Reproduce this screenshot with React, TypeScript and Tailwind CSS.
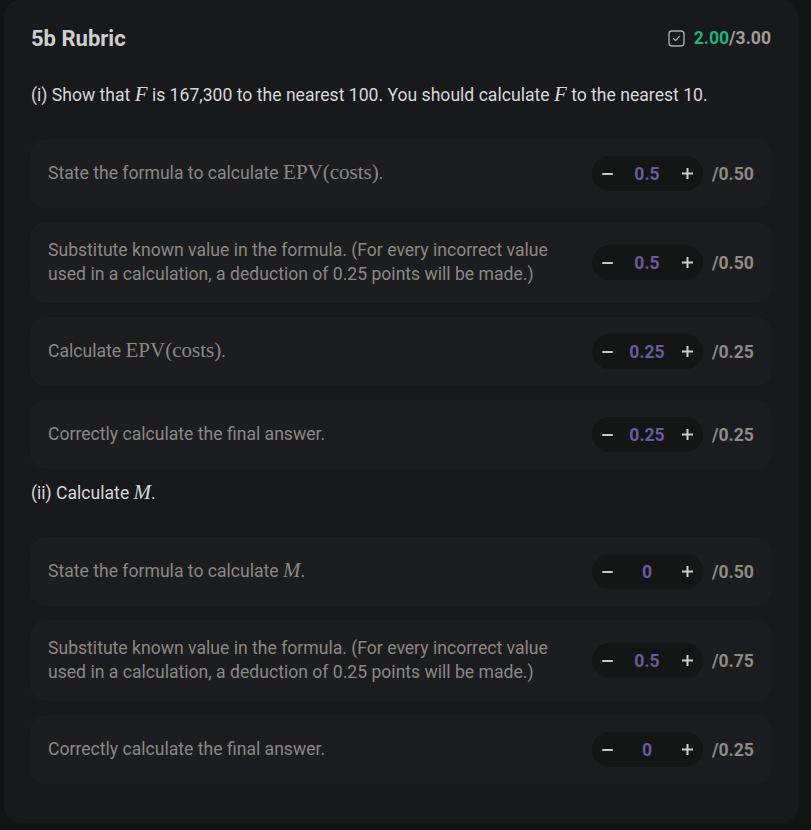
import React from "react";

const M = ({ children, upright = false }: { children: React.ReactNode; upright?: boolean }) => (
  <span
    className={`text-[21px] leading-none ${upright ? "not-italic" : "italic"}`}
    style={{ fontFamily: '"Liberation Serif", "DejaVu Serif", serif' }}
  >
    {children}
  </span>
);

type Item = { text: React.ReactNode; value: string; max: string };

const Row = ({ item }: { item: Item }) => (
  <div className="flex items-center justify-between rounded-2xl bg-[#1c1d1f] py-[17px] pl-[18px] pr-[16px]">
    <div className="max-w-[520px] text-[17.6px] leading-[23.5px] text-[#8c8881]">{item.text}</div>
    <div className="flex items-center gap-[9px]">
      <div className="flex h-[35px] w-[111px] items-center justify-between rounded-full bg-[#141515] pl-[10px] pr-[9px] font-bold">
        <span className="block h-[2px] w-[11px] rounded-[1px] bg-[#c9c9c9]" />
        <span className="text-[17.6px] leading-[24px] text-[#6a5a9e]">{item.value}</span>
        <svg width="13" height="13" viewBox="0 0 13 13">
          <path d="M6.5 1 V12 M1 6.5 H12" stroke="#cfcfcf" strokeWidth="2" />
        </svg>
      </div>
      <span className="w-[44px] text-[17.6px] leading-[24px] font-bold text-[#8f8a83]">{item.max}</span>
    </div>
  </div>
);

export default function App() {
  const sec1: Item[] = [
    {
      text: (
        <>
          State the formula to calculate <M upright>EPV(costs)</M>.
        </>
      ),
      value: "0.5",
      max: "/0.50",
    },
    {
      text: (
        <>
          Substitute known value in the formula. (For every incorrect value used in a calculation, a deduction of 0.25
          points will be made.)
        </>
      ),
      value: "0.5",
      max: "/0.50",
    },
    {
      text: (
        <>
          Calculate <M upright>EPV(costs)</M>.
        </>
      ),
      value: "0.25",
      max: "/0.25",
    },
    { text: <>Correctly calculate the final answer.</>, value: "0.25", max: "/0.25" },
  ];
  const sec2: Item[] = [
    {
      text: (
        <>
          State the formula to calculate <M>M</M>.
        </>
      ),
      value: "0",
      max: "/0.50",
    },
    {
      text: (
        <>
          Substitute known value in the formula. (For every incorrect value used in a calculation, a deduction of 0.25
          points will be made.)
        </>
      ),
      value: "0.5",
      max: "/0.75",
    },
    { text: <>Correctly calculate the final answer.</>, value: "0", max: "/0.25" },
  ];

  return (
    <div
      className="min-h-[830px] w-full bg-[#121413] pl-[4px]"
      style={{ fontFamily: 'Roboto, "Liberation Sans", sans-serif' }}
    >
      <div className="flex h-[823px] w-[794px] flex-col rounded-2xl bg-[#18191b] px-[26px] pt-[26px]">
        <div className="flex h-[24px] items-center justify-between pl-[1px] pr-[1px]">
          <h1 className="text-[22px] font-bold text-[#cfcfcf]">5b Rubric</h1>
          <div className="flex items-center gap-[9px]">
            <svg width="17" height="17" viewBox="0 0 17 17" fill="none">
              <rect x="1" y="1" width="15" height="15" rx="3" stroke="#a8a8a8" strokeWidth="1.4" />
              <path d="M5.6 8.8 L7.6 10.6 L11.2 6.6" stroke="#a8a8a8" strokeWidth="1.4" strokeLinecap="round" strokeLinejoin="round" />
            </svg>
            <span className="text-[17.6px] font-bold">
              <span className="text-[#23b07f]">2.00</span>
              <span className="text-[#a19d97]">/3.00</span>
            </span>
          </div>
        </div>

        <p className="mt-[33px] h-[24px] pl-[1px] text-[17.6px] leading-[24px] text-[#d8d8d8]">
          (i) Show that <M>F</M> is 167,300 to the nearest 100. You should calculate <M>F</M> to the nearest 10.
        </p>
        <div className="mt-[32px] flex flex-col gap-[14px]">
          {sec1.map((it, i) => (
            <Row key={i} item={it} />
          ))}
        </div>

        <p className="mt-[12px] h-[24px] pl-[1px] text-[17.6px] leading-[24px] text-[#d8d8d8]">
          (ii) Calculate <M>M</M>.
        </p>
        <div className="mt-[32px] flex flex-col gap-[14px]">
          {sec2.map((it, i) => (
            <Row key={i} item={it} />
          ))}
        </div>
      </div>
    </div>
  );
}
